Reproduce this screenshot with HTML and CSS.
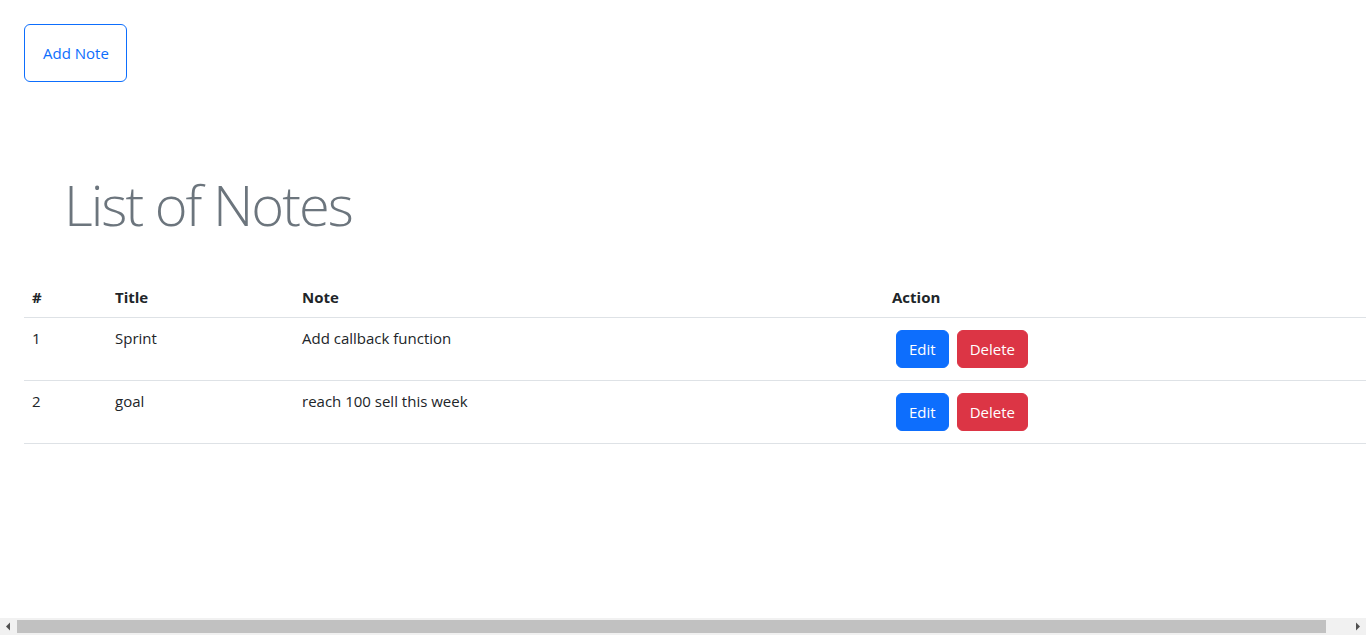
FILE: index.html
```html
<!DOCTYPE html>
<html lang="en">
<head>
<meta charset="utf-8">
<title>Notes</title>
<link rel="stylesheet" href="styles.css">
</head>
<body>
<div class="toolbar">
  <button class="btn btn-outline-primary">Add Note</button>
</div>
<h1 class="title">List of Notes</h1>
<table class="notes">
  <colgroup>
    <col class="c-num"><col class="c-title"><col class="c-note"><col class="c-action">
  </colgroup>
  <thead>
    <tr><th>#</th><th>Title</th><th>Note</th><th>Action</th></tr>
  </thead>
  <tbody>
    <tr>
      <td>1</td><td>Sprint</td><td>Add callback function</td>
      <td><button class="btn btn-primary">Edit</button><button class="btn btn-danger">Delete</button></td>
    </tr>
    <tr>
      <td>2</td><td>goal</td><td>reach 100 sell this week</td>
      <td><button class="btn btn-primary">Edit</button><button class="btn btn-danger">Delete</button></td>
    </tr>
  </tbody>
</table>
<div class="hscroll" aria-hidden="true">
  <span class="hscroll-btn">
    <svg width="17" height="17" viewBox="0 0 17 17"><path d="M6 8.5 L10 4.5 L10 12.5 Z" fill="#505050"/></svg>
  </span>
  <span class="hscroll-track"><span class="hscroll-thumb"></span></span>
  <span class="hscroll-btn">
    <svg width="17" height="17" viewBox="0 0 17 17"><path d="M11 8.5 L7 4.5 L7 12.5 Z" fill="#505050"/></svg>
  </span>
</div>
</body>
</html>
```
FILE: styles.css
```css
html, body {
  margin: 0;
  background: #fff;
}
body {
  font-family: "Open Sans", "Noto Sans", sans-serif;
  font-size: 15px;
  line-height: 24px;
  color: #212529;
}
.toolbar {
  padding: 24px;
  display: flex;
}
.btn {
  font-family: inherit;
  font-size: 15px;
  line-height: 24px;
  border: 1px solid transparent;
  border-radius: 6px;
  padding: 6px 12px;
  cursor: pointer;
  background: transparent;
}
.btn-outline-primary {
  color: #0d6efd;
  border-color: #0d6efd;
  padding: 16px 17px 16px 18px;
}
.btn-primary {
  color: #fff;
  background: #0d6efd;
  border-color: #0d6efd;
  margin: 4px;
  padding: 6px 12px;
}
.btn-danger {
  color: #fff;
  background: #dc3545;
  border-color: #dc3545;
  margin: 4px;
  padding: 6px 12px;
}
.title {
  margin: 64px 0 0 64px;
  font-weight: 300;
  font-size: 56px;
  letter-spacing: -2px;
  line-height: 68px;
  color: #6c757d;
}
.notes {
  margin: 39px 24px 0 24px;
  width: 100%;
  border-collapse: collapse;
  vertical-align: top;
}
.c-num { width: 83px; }
.c-title { width: 187px; }
.c-note { width: 590px; }
.notes th, .notes td {
  text-align: left;
  padding: 8px;
  border-bottom: 1px solid #dee2e6;
  vertical-align: top;
}
.notes th {
  font-weight: 700;
}

/* horizontal scrollbar as shown in the reference */
.hscroll {
  position: fixed;
  left: 0;
  right: 0;
  bottom: 0;
  height: 17px;
  display: flex;
  background: #f1f1f1;
}
.hscroll-btn {
  width: 17px;
  height: 17px;
  flex: none;
  display: flex;
}
.hscroll-track {
  flex: 1;
  display: flex;
  align-items: center;
}
.hscroll-thumb {
  width: 1309px;
  height: 13px;
  background: #c1c1c1;
}
```
